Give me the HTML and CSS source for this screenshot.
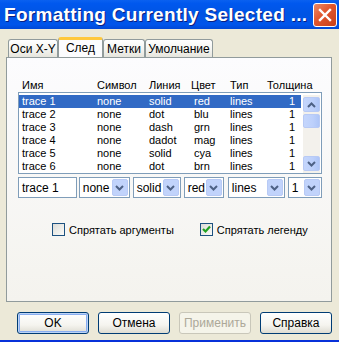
FILE: index.html
```html
<!DOCTYPE html>
<html lang="ru">

<head>
    <meta charset="UTF-8">
    <title>Formatting Currently Selected Trace</title>
    <link rel="stylesheet" href="styles.css">
</head>

<body>
    <div class="window">
        <div class="titlebar">
            <span class="title">Formatting Currently Selected ...</span>
            <div class="close-btn">
                <svg width="14" height="14" viewBox="0 0 14 14">
                    <path d="M2 2 L12 12 M12 2 L2 12" stroke="#fff" stroke-width="2.4" stroke-linecap="square" />
                </svg>
            </div>
        </div>

        <div class="client">
            <div class="tabs">
                <div class="tab tab-axes">Оси X-Y</div>
                <div class="tab tab-trace active">След</div>
                <div class="tab tab-labels">Метки</div>
                <div class="tab tab-default">Умолчание</div>
            </div>

            <div class="panel">
                <div class="grid header-row">
                    <span>Имя</span>
                    <span>Символ</span>
                    <span>Линия</span>
                    <span>Цвет</span>
                    <span>Тип</span>
                    <span>Толщина</span>
                </div>

                <div class="listbox">
                    <div class="rows" id="rows"></div>
                    <div class="scrollbar">
                        <div class="sb-btn">
                            <svg width="9" height="6" viewBox="0 0 9 6"><path d="M1 5 L4.5 1.5 L8 5" fill="none" stroke="#4d6185" stroke-width="2" /></svg>
                        </div>
                        <div class="sb-thumb"></div>
                        <div class="sb-track"></div>
                        <div class="sb-btn">
                            <svg width="9" height="6" viewBox="0 0 9 6"><path d="M1 1 L4.5 4.5 L8 1" fill="none" stroke="#4d6185" stroke-width="2" /></svg>
                        </div>
                    </div>
                </div>

                <div class="edit-row">
                    <div class="textbox w-name">trace 1</div>
                    <div class="combo w-symbol"><span>none</span><i class="dd"></i></div>
                    <div class="combo w-line"><span>solid</span><i class="dd"></i></div>
                    <div class="combo w-color"><span>red</span><i class="dd"></i></div>
                    <div class="combo w-type"><span>lines</span><i class="dd"></i></div>
                    <div class="combo w-width"><span>1</span><i class="dd"></i></div>
                </div>

                <div class="checks">
                    <label class="check"><span class="box"></span>Спрятать аргументы</label>
                    <label class="check"><span class="box checked">
                        <svg width="9" height="9" viewBox="0 0 9 9"><path d="M1 4 L3.5 6.5 L8 1.5" fill="none" stroke="#21a121" stroke-width="2.2" /></svg>
                    </span>Спрятать легенду</label>
                </div>
            </div>

            <div class="buttons">
                <div class="btn default">OK</div>
                <div class="btn">Отмена</div>
                <div class="btn disabled">Применить</div>
                <div class="btn">Справка</div>
            </div>
        </div>
        <div class="frame-bottom"></div>
    </div>

    <script>
        const traces = [
            ['trace 1', 'none', 'solid', 'red', 'lines', '1'],
            ['trace 2', 'none', 'dot', 'blu', 'lines', '1'],
            ['trace 3', 'none', 'dash', 'grn', 'lines', '1'],
            ['trace 4', 'none', 'dadot', 'mag', 'lines', '1'],
            ['trace 5', 'none', 'solid', 'cya', 'lines', '1'],
            ['trace 6', 'none', 'dot', 'brn', 'lines', '1']
        ];

        const rows = document.getElementById('rows');
        traces.forEach((t, i) => {
            const row = document.createElement('div');
            row.className = 'grid row' + (i === 0 ? ' selected' : '');
            t.forEach((cell, j) => {
                const span = document.createElement('span');
                span.textContent = cell;
                if (j === 5) span.className = 'num';
                row.appendChild(span);
            });
            rows.appendChild(row);
        });
    </script>
</body>

</html>
```

FILE: styles.css
```css
body {
    margin: 0;
    font-family: "Liberation Sans", Arial, sans-serif;
    font-size: 11px;
    color: #000;
    background: #ece9d8;
}

.window {
    width: 339px;
    height: 342px;
    display: flex;
    flex-direction: column;
    background: #ece9d8;
    overflow: hidden;
}

/* title bar */
.titlebar {
    height: 29px;
    display: flex;
    align-items: center;
    justify-content: space-between;
    padding: 0 2px 0 4px;
    background: linear-gradient(#0a61f0 0%, #0058ee 12%, #0054e3 50%, #0055eb 85%, #0048d6 100%);
    box-sizing: border-box;
}

.title {
    color: #fff;
    font-weight: bold;
    font-size: 19px;
    letter-spacing: 0.3px;
    text-shadow: 1px 1px #0a1f80;
    white-space: nowrap;
}

.close-btn {
    width: 22px;
    height: 22px;
    border: 1px solid #fff;
    border-radius: 3px;
    background: linear-gradient(135deg, #e98a68 0%, #e0552d 45%, #c8401a 100%);
    display: flex;
    align-items: center;
    justify-content: center;
}

/* client area */
.client {
    flex: 1;
    padding: 8px 7px 0 6px;
    display: flex;
    flex-direction: column;
}

.tabs {
    display: flex;
    align-items: flex-end;
    height: 20px;
    padding-left: 2px;
}

.tab {
    height: 18px;
    box-sizing: border-box;
    border: 1px solid #919b9c;
    border-bottom: none;
    border-radius: 3px 3px 0 0;
    background: linear-gradient(#ffffff, #f3f3ef 60%, #e6e5dd);
    display: flex;
    align-items: center;
    justify-content: center;
    font-size: 12px;
}

.tab-axes { width: 50px; }
.tab-trace { width: 45px; }
.tab-labels { width: 42px; }
.tab-default { width: 68px; }

.tab.active {
    height: 21px;
    margin-bottom: -1px;
    border-top: 3px solid #ffc83c;
    border-color: #ffc83c #919b9c;
    background: #fcfcfe;
    padding-bottom: 3px;
}

.panel {
    height: 245px;
    border: 1px solid #919b9c;
    background: linear-gradient(#fcfcfe, #f4f3ee);
    padding: 21px 9px 0 11px;
    box-sizing: border-box;
}

/* list */
.grid {
    display: grid;
    grid-template-columns: 75px 52px 45px 36px 37px 35px;
    height: 13px;
    line-height: 13px;
    white-space: nowrap;
}

.grid span {
    padding-left: 3px;
}

.header-row {
    margin-left: 1px;
}

.header-row span:nth-child(4) { padding-left: 0; }

.listbox {
    height: 82px;
    box-sizing: border-box;
    border: 1px solid #7f9db9;
    background: #fff;
    display: flex;
    padding-top: 2px;
}

.rows {
    width: 282px;
}

.row.selected {
    background: #316ac5;
    color: #fff;
}

.row .num {
    text-align: right;
    padding: 0 4px 0 0;
}

.scrollbar {
    width: 17px;
    margin-left: 2px;
    display: flex;
    flex-direction: column;
    padding: 2px 0;
    background: #f3f1ec;
}

.sb-btn,
.sb-thumb {
    height: 15px;
    box-sizing: border-box;
    border: 1px solid #b8caf5;
    border-radius: 2px;
    background: linear-gradient(90deg, #c5d6fc, #bcd0fb 60%, #aec5f7);
    display: flex;
    align-items: center;
    justify-content: center;
}

.sb-thumb {
    height: 14px;
    margin-top: 2px;
}

.sb-track {
    flex: 1;
}

/* edit row */
.edit-row {
    display: flex;
    gap: 2px;
    margin-top: 3px;
    height: 21px;
}

.textbox,
.combo {
    box-sizing: border-box;
    height: 21px;
    border: 1px solid #7f9db9;
    background: #fff;
    display: flex;
    align-items: center;
    padding-left: 3px;
    font-size: 12px;
}

.combo {
    justify-content: space-between;
    padding-right: 1px;
}

.w-name { width: 60px; }
.w-symbol { width: 52px; }
.w-line { width: 49px; margin-left: 1px; }
.w-color { width: 41px; margin-left: 1px; }
.w-type { width: 58px; margin-left: 2px; }
.w-width { width: 35px; margin-left: 1px; }

.dd {
    width: 16px;
    height: 17px;
    box-sizing: border-box;
    border: 1px solid #b8caf5;
    border-radius: 2px;
    background: #c1d3fb url("data:image/svg+xml;utf8,<svg xmlns='http://www.w3.org/2000/svg' width='9' height='6'><path d='M1 1 L4.5 4.5 L8 1' fill='none' stroke='%234d6185' stroke-width='2'/></svg>") no-repeat center;
}

/* check boxes */
.checks {
    display: flex;
    margin-top: 25px;
    padding-left: 34px;
    gap: 26px;
}

.check {
    display: flex;
    align-items: center;
    gap: 4px;
    font-size: 11px;
    white-space: nowrap;
}

.box {
    width: 13px;
    height: 13px;
    flex: none;
    box-sizing: border-box;
    border: 1px solid #1c5180;
    background: linear-gradient(135deg, #dcdcd7, #fbfbf9);
    display: flex;
    align-items: center;
    justify-content: center;
}

/* dialog buttons */
.buttons {
    display: flex;
    gap: 9px;
    margin-top: 10px;
    padding-left: 11px;
}

.btn {
    width: 73px;
    height: 22px;
    box-sizing: border-box;
    border: 1px solid #003c74;
    border-radius: 3px;
    background: linear-gradient(#ffffff, #f5f4ef 60%, #dedcd2);
    display: flex;
    align-items: center;
    justify-content: center;
    font-size: 12px;
}

.btn.default {
    box-shadow: inset 0 0 0 1px #bcd4f6, inset 0 0 0 2px #89adf0;
}

.btn.disabled {
    border-color: #c9c7ba;
    background: #f5f4ea;
    color: #aca899;
}

.frame-bottom {
    height: 2px;
    margin-top: auto;
    background: #0831d9;
}
```
